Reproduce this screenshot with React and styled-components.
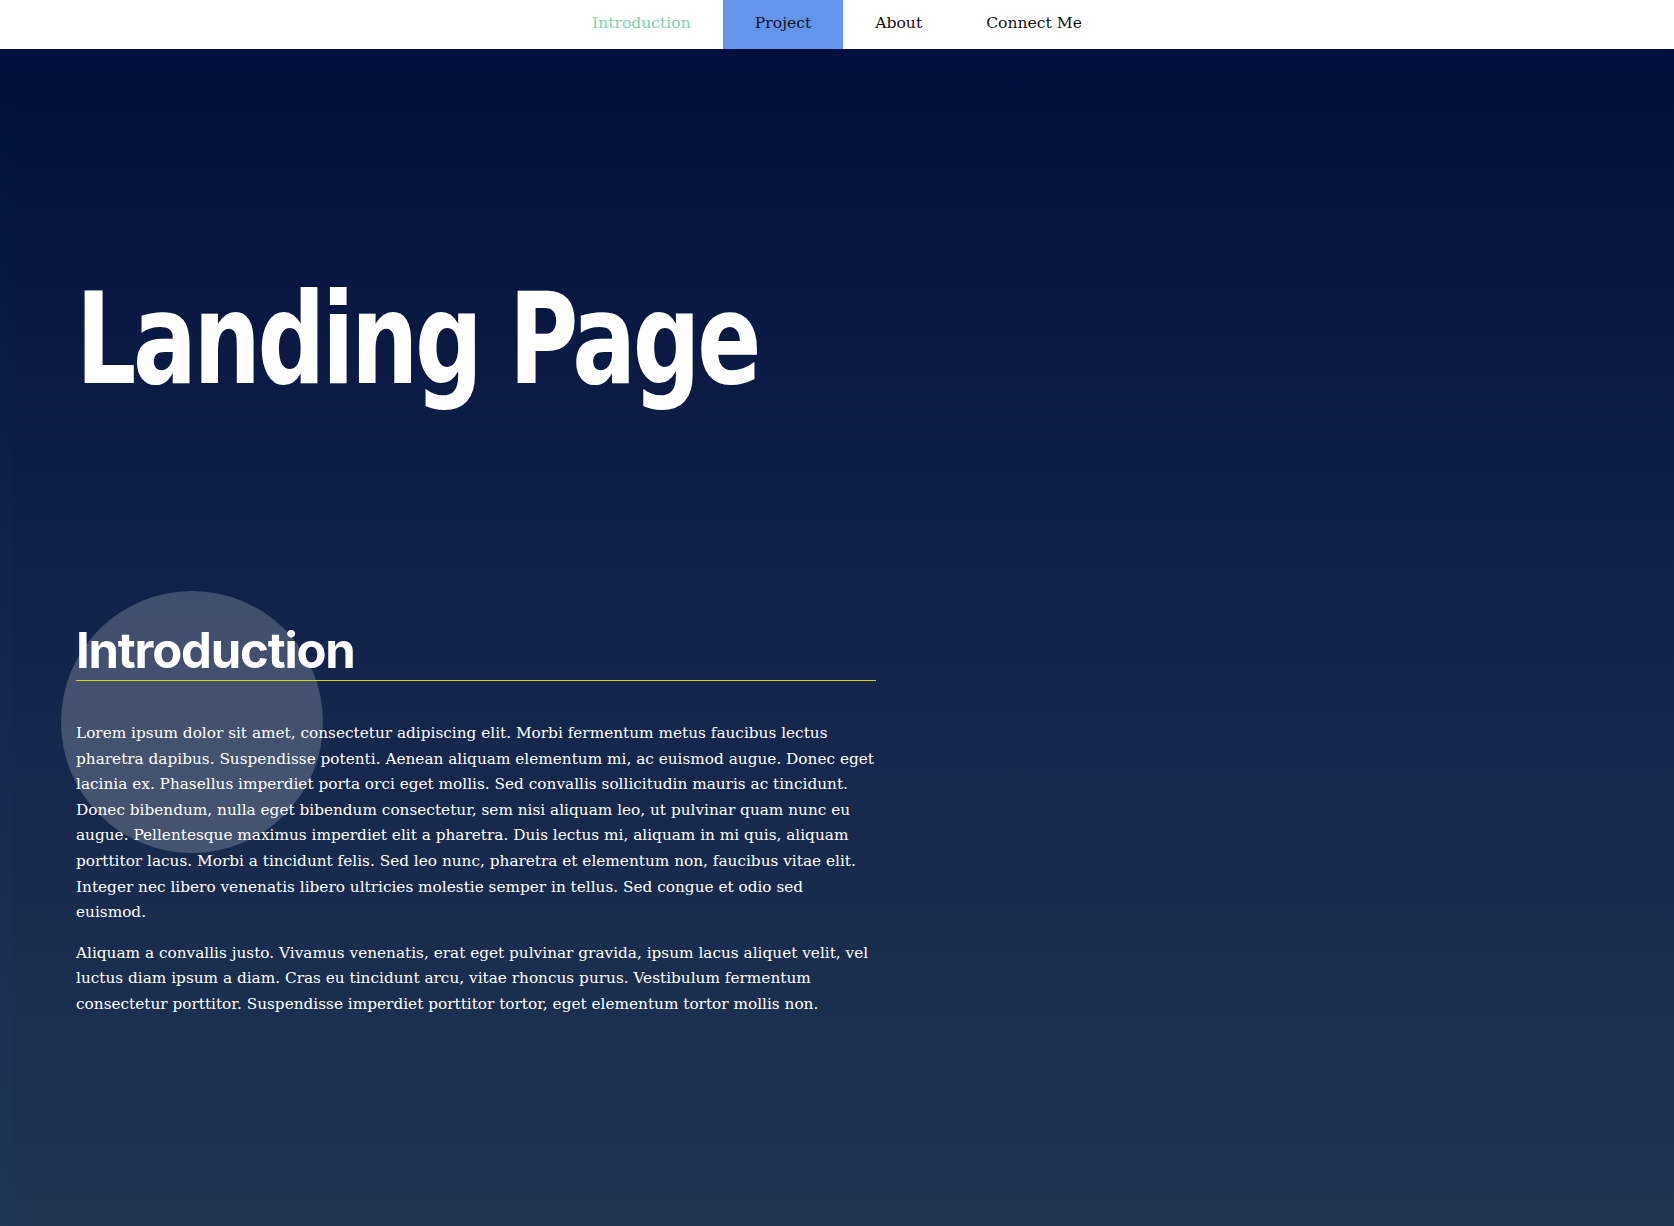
import styled, { createGlobalStyle } from 'styled-components'

const GlobalStyle = createGlobalStyle`
  html, body {
    margin: 0;
    padding: 0;
  }
  body {
    font-family: 'DejaVu Serif', serif;
    background: #1f3552;
  }
`

const NavBar = styled.nav`
  display: flex;
  justify-content: center;
  height: 49px;
  background: #ffffff;
`

const NavLink = styled.a`
  display: flex;
  align-items: center;
  padding: 0 32px 4px;
  font-family: 'DejaVu Serif', serif;
  font-size: 15.6px;
  color: ${(props) => (props.current ? '#80d1ad' : '#111111')};
  background: ${(props) => (props.active ? '#6495ed' : 'transparent')};
  text-decoration: none;
`

const Main = styled.main`
  min-height: calc(100vh - 49px);
  background:
    linear-gradient(180deg, transparent 0%, rgba(20, 70, 120, 0.1) 100%) left top / 12px 100% no-repeat,
    linear-gradient(180deg, #000f3b 0%, #13244b 50%, #1f3552 100%);
  padding: 0 76px 120px;
  box-sizing: border-box;
`

const Hero = styled.header`
  padding-top: 228px;
  height: 542px;
  box-sizing: border-box;
`

const Title = styled.h1`
  margin: 0;
  font-family: 'DejaVu Sans', sans-serif;
  font-stretch: condensed;
  font-weight: 900;
  font-size: 126px;
  line-height: 1;
  letter-spacing: -4px;
  color: #ffffff;
  transform: scaleX(0.835);
  transform-origin: left center;
`

const Section = styled.section`
  position: relative;
  width: 800px;
`

const Bubble = styled.div`
  position: absolute;
  left: -15px;
  top: 0;
  width: 262px;
  height: 262px;
  border-radius: 50%;
  background: rgba(255, 255, 255, 0.2);
`

const Heading = styled.h2`
  position: relative;
  margin: 0 0 40px;
  padding-top: 30px;
  font-family: 'Inter', 'Roboto', sans-serif;
  font-weight: 700;
  font-size: 49px;
  line-height: 59px;
  letter-spacing: -1.2px;
  color: #ffffff;
  border-bottom: 1px solid #d2d614;
`

const Paragraph = styled.p`
  position: relative;
  margin: 0 0 15px;
  font-size: 15.3px;
  line-height: 25.6px;
  color: #ffffff;
`

const App = () => {
  return (
    <>
      <GlobalStyle />
      <NavBar>
        <NavLink current href='#intro'>Introduction</NavLink>
        <NavLink active href='#project'>Project</NavLink>
        <NavLink href='#about'>About</NavLink>
        <NavLink href='#contact'>Connect Me</NavLink>
      </NavBar>
      <Main>
        <Hero>
          <Title>Landing Page</Title>
        </Hero>
        <Section id='intro'>
          <Bubble />
          <Heading>Introduction</Heading>
          <Paragraph>
            Lorem ipsum dolor sit amet, consectetur adipiscing elit. Morbi fermentum metus faucibus lectus pharetra dapibus. Suspendisse potenti. Aenean aliquam elementum mi, ac euismod augue. Donec eget lacinia ex. Phasellus imperdiet porta orci eget mollis. Sed convallis sollicitudin mauris ac tincidunt. Donec bibendum, nulla eget bibendum consectetur, sem nisi aliquam leo, ut pulvinar quam nunc eu augue. Pellentesque maximus imperdiet elit a pharetra. Duis lectus mi, aliquam in mi quis, aliquam porttitor lacus. Morbi a tincidunt felis. Sed leo nunc, pharetra et elementum non, faucibus vitae elit. Integer nec libero venenatis libero ultricies molestie semper in tellus. Sed congue et odio sed euismod.
          </Paragraph>
          <Paragraph>
            Aliquam a convallis justo. Vivamus venenatis, erat eget pulvinar gravida, ipsum lacus aliquet velit, vel luctus diam ipsum a diam. Cras eu tincidunt arcu, vitae rhoncus purus. Vestibulum fermentum consectetur porttitor. Suspendisse imperdiet porttitor tortor, eget elementum tortor mollis non.
          </Paragraph>
        </Section>
      </Main>
    </>
  )
}

export default App
